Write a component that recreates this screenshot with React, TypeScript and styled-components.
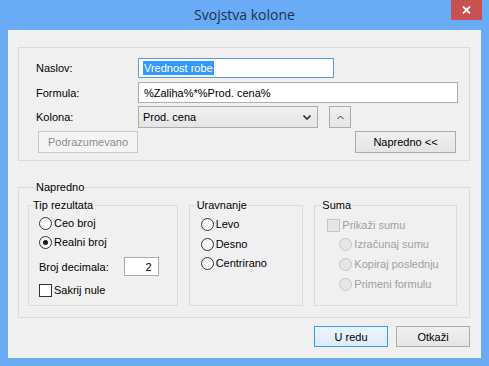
import React from 'react';
import styled, { createGlobalStyle } from 'styled-components';

const GlobalStyle = createGlobalStyle`
  html, body {
    margin: 0;
    padding: 0;
  }
  body {
    font-family: "Liberation Sans", Arial, sans-serif;
    font-size: 11px;
    color: #000;
  }
`;

const Window = styled.div`
  width: 489px;
  height: 366px;
  box-sizing: border-box;
  padding: 0 8px 8px;
  background: #6aabf5;
  display: flex;
  flex-direction: column;
`;

const TitleBar = styled.div`
  height: 30px;
  display: grid;
  grid-template-columns: 1fr auto 1fr;
  align-items: start;
`;

const Title = styled.div`
  grid-column: 2;
  font-family: "Open Sans", "Noto Sans", sans-serif;
  font-size: 14px;
  line-height: 30px;
  color: #1b3352;
`;

const CloseButton = styled.div`
  grid-column: 3;
  justify-self: end;
  margin-right: -1px;
  width: 31px;
  height: 20px;
  background: #c75050;
  display: flex;
  align-items: center;
  justify-content: center;
`;

const Client = styled.div`
  flex: 1;
  background: #f0f0f0;
  padding: 17px 11px 0 10px;
  display: flex;
  flex-direction: column;
`;

const Group = styled.div`
  box-sizing: border-box;
  height: 114px;
  border: 1px solid #dcdcdc;
  padding: 10px 11px 0 17px;
  display: flex;
  flex-direction: column;
`;

const FormRow = styled.div<{ $h: number; $mt?: number }>`
  height: ${({ $h }) => $h}px;
  margin-top: ${({ $mt }) => $mt ?? 0}px;
  display: flex;
  align-items: center;
`;

const Label = styled.div`
  width: 102px;
  flex-shrink: 0;
`;

const TextBox = styled.div<{ $w: number; $focused?: boolean }>`
  box-sizing: border-box;
  width: ${({ $w }) => $w}px;
  height: 100%;
  border: 1px solid ${({ $focused }) => ($focused ? '#569de5' : '#abadb3')};
  background: #fff;
  padding: 0 5px 0 5px;
  display: flex;
  align-items: center;
  white-space: nowrap;
`;

const Selected = styled.span`
  background: #3399ff;
  color: #fff;
  line-height: 14px;
  margin-left: -1px;
  padding: 0 1px;
`;

const Combo = styled.div`
  box-sizing: border-box;
  width: 180px;
  height: 100%;
  border: 1px solid #acacac;
  background: linear-gradient(#f0f0f0, #e5e5e5);
  padding: 0 6px 0 4px;
  display: flex;
  align-items: center;
  justify-content: space-between;
`;

const Button = styled.div<{ $w: number; $disabled?: boolean; $default?: boolean }>`
  box-sizing: border-box;
  width: ${({ $w }) => $w}px;
  height: 100%;
  border: 1px solid
    ${({ $disabled, $default }) => ($default ? '#3399ff' : $disabled ? '#c6c6c6' : '#acacac')};
  background: ${({ $disabled, $default }) =>
    $disabled
      ? '#f4f4f4'
      : $default
        ? 'linear-gradient(#ecf4fc, #dcecfc)'
        : 'linear-gradient(#f0f0f0, #e5e5e5)'};
  color: ${({ $disabled }) => ($disabled ? '#8d8d8d' : '#000')};
  display: flex;
  align-items: center;
  justify-content: center;
`;

const ButtonsRow = styled.div`
  height: 22px;
  margin-top: 3px;
  display: flex;
  justify-content: space-between;
  padding: 0 2px 0 2px;
`;

const Fieldset = styled.fieldset<{ $w?: number; $h?: number }>`
  box-sizing: border-box;
  margin: 0;
  min-width: 0;
  width: ${({ $w }) => ($w ? `${$w}px` : 'auto')};
  height: ${({ $h }) => ($h ? `${$h}px` : 'auto')};
  border: 1px solid #dcdcdc;
  padding: 0;
`;

const Legend = styled.legend<{ $offset: number }>`
  margin-left: ${({ $offset }) => $offset}px;
  padding: 0 1px;
  line-height: 14px;
  color: #000;
`;

const AdvancedGroup = styled(Fieldset)`
  margin-top: 19px;
  padding: 4px 12px 11px 9px;
`;

const InnerGroups = styled.div`
  display: flex;
  gap: 11px;
`;

const Options = styled.div<{ $pl: number }>`
  padding: 3px 0 0 ${({ $pl }) => $pl}px;
  display: flex;
  flex-direction: column;
`;

const OptionRow = styled.div<{ $mt?: number; $disabled?: boolean }>`
  height: 16px;
  margin-top: ${({ $mt }) => $mt ?? 0}px;
  display: flex;
  align-items: center;
  gap: 2px;
  color: ${({ $disabled }) => ($disabled ? '#a0a0a0' : '#000')};
  white-space: nowrap;
`;

const RadioCircle = styled.span<{ $checked?: boolean; $disabled?: boolean }>`
  box-sizing: border-box;
  width: 13px;
  height: 13px;
  border-radius: 50%;
  border: 1px solid ${({ $disabled }) => ($disabled ? '#c6c6c6' : '#333')};
  background: ${({ $disabled }) => ($disabled ? '#e6e6e6' : 'linear-gradient(#f4f4f4, #fff)')};
  display: flex;
  align-items: center;
  justify-content: center;
  flex-shrink: 0;

  &::after {
    content: '';
    display: ${({ $checked }) => ($checked ? 'block' : 'none')};
    width: 5px;
    height: 5px;
    border-radius: 50%;
    background: #1a1a1a;
  }
`;

const CheckBox = styled.span<{ $disabled?: boolean }>`
  box-sizing: border-box;
  width: 13px;
  height: 13px;
  border: 1px solid ${({ $disabled }) => ($disabled ? '#c6c6c6' : '#333')};
  background: ${({ $disabled }) => ($disabled ? '#e6e6e6' : '#fff')};
  flex-shrink: 0;
`;

const DecimalsRow = styled.div`
  height: 19px;
  margin-top: 7px;
  display: flex;
  align-items: center;
  justify-content: space-between;
  padding-right: 18px;
`;

const NumberBox = styled.div`
  box-sizing: border-box;
  width: 35px;
  height: 19px;
  border: 1px solid #abadb3;
  background: #fff;
  padding-right: 6px;
  display: flex;
  align-items: center;
  justify-content: flex-end;
`;

const Footer = styled.div`
  margin-top: 8px;
  height: 21px;
  display: flex;
  justify-content: flex-end;
  gap: 8px;
`;

const Radio: React.FC<{ label: string; checked?: boolean; disabled?: boolean; mt?: number }> = ({
  label,
  checked,
  disabled,
  mt,
}) => (
  <OptionRow $mt={mt} $disabled={disabled}>
    <RadioCircle $checked={checked} $disabled={disabled} />
    <span>{label}</span>
  </OptionRow>
);

const App: React.FC = () => (
  <>
    <GlobalStyle />
    <Window>
      <TitleBar>
        <Title>Svojstva kolone</Title>
        <CloseButton>
          <svg width="9" height="8" viewBox="0 0 9 8">
            <path d="M1 0.5 L8 7.5 M8 0.5 L1 7.5" stroke="#fff" strokeWidth="1.8" />
          </svg>
        </CloseButton>
      </TitleBar>
      <Client>
        <Group>
          <FormRow $h={20}>
            <Label>Naslov:</Label>
            <TextBox $w={196} $focused>
              <Selected>Vrednost robe</Selected>
            </TextBox>
          </FormRow>
          <FormRow $h={21} $mt={4}>
            <Label>Formula:</Label>
            <TextBox $w={321}>%Zaliha%*%Prod. cena%</TextBox>
          </FormRow>
          <FormRow $h={22} $mt={3}>
            <Label>Kolona:</Label>
            <Combo>
              <span>Prod. cena</span>
              <svg width="8" height="5" viewBox="0 0 8 5">
                <path d="M0.5 0.5 L4 4 L7.5 0.5" stroke="#333" strokeWidth="1.6" fill="none" />
              </svg>
            </Combo>
            <Button $w={22} style={{ marginLeft: 11 }}>
              <svg width="7" height="5" viewBox="0 0 7 5">
                <path d="M0.5 4 L3.5 1 L6.5 4" stroke="#333" strokeWidth="1" fill="none" />
              </svg>
            </Button>
          </FormRow>
          <ButtonsRow>
            <Button $w={100} $disabled>
              Podrazumevano
            </Button>
            <Button $w={101}>Napredno &lt;&lt;</Button>
          </ButtonsRow>
        </Group>

        <AdvancedGroup>
          <Legend $offset={7}>Napredno</Legend>
          <InnerGroups>
            <Fieldset $w={150} $h={108}>
              <Legend $offset={3}>Tip rezultata</Legend>
              <Options $pl={10}>
                <Radio label="Ceo broj" />
                <Radio label="Realni broj" checked mt={3} />
                <DecimalsRow>
                  <span>Broj decimala:</span>
                  <NumberBox>2</NumberBox>
                </DecimalsRow>
                <OptionRow $mt={6}>
                  <CheckBox />
                  <span>Sakrij nule</span>
                </OptionRow>
              </Options>
            </Fieldset>
            <Fieldset $w={115} $h={108}>
              <Legend $offset={6}>Uravnanje</Legend>
              <Options $pl={11}>
                <Radio label="Levo" mt={1} />
                <Radio label="Desno" mt={4} />
                <Radio label="Centrirano" mt={3} />
              </Options>
            </Fieldset>
            <Fieldset $w={143} $h={108}>
              <Legend $offset={6}>Suma</Legend>
              <Options $pl={12}>
                <OptionRow $mt={2} $disabled>
                  <CheckBox $disabled />
                  <span>Prikaži sumu</span>
                </OptionRow>
                <Options $pl={12} style={{ paddingTop: 0 }}>
                  <Radio label="Izračunaj sumu" disabled mt={3} />
                  <Radio label="Kopiraj poslednju" disabled mt={4} />
                  <Radio label="Primeni formulu" disabled mt={4} />
                </Options>
              </Options>
            </Fieldset>
          </InnerGroups>
        </AdvancedGroup>

        <Footer>
          <Button $w={74} $default>
            U redu
          </Button>
          <Button $w={74}>Otkaži</Button>
        </Footer>
      </Client>
    </Window>
  </>
);

export default App;
